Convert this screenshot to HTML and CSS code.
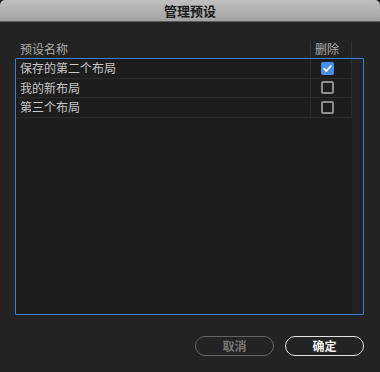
FILE: index.html
```html
<!DOCTYPE html>
<html lang="zh-CN">
<head>
    <meta charset="UTF-8">
    <title>管理预设</title>
    <link rel="stylesheet" href="styles.css">
</head>
<body>
    <div class="window">
        <div class="titlebar">管理预设</div>
        <div class="content">
            <div class="list-head">
                <div class="col-name">预设名称</div>
                <div class="col-del">删除</div>
            </div>
            <div class="list">
                <div class="rows">
                    <div class="row">
                        <div class="cell-name">保存的第二个布局</div>
                        <div class="cell-del"><span class="check checked">
                            <svg width="13" height="13" viewBox="0 0 13 13"><path d="M3.2 6.8 L5.4 9 L9.8 4.2" fill="none" stroke="#fff" stroke-width="1.8" stroke-linecap="round" stroke-linejoin="round"/></svg>
                        </span></div>
                    </div>
                    <div class="row">
                        <div class="cell-name">我的新布局</div>
                        <div class="cell-del"><span class="check"></span></div>
                    </div>
                    <div class="row">
                        <div class="cell-name">第三个布局</div>
                        <div class="cell-del"><span class="check"></span></div>
                    </div>
                </div>
                <div class="scroll"></div>
            </div>
            <div class="buttons">
                <button class="btn btn-cancel">取消</button>
                <button class="btn btn-ok">确定</button>
            </div>
        </div>
    </div>
</body>
</html>
```

FILE: styles.css
```css
html {
    background: #151515;
}
body {
    margin: 0;
    font-family: "Noto Sans CJK SC", "Noto Sans", sans-serif;
    font-size: 12px;
}
.window {
    width: 380px;
    height: 372px;
    background: #232323;
    border-radius: 5px 5px 0 0;
    overflow: hidden;
}
.titlebar {
    height: 22px;
    line-height: 22px;
    text-align: center;
    font-size: 13px;
    font-weight: 700;
    color: #1c1c1c;
    background: linear-gradient(#c0c0c0, #a2a2a2);
    border-bottom: 1px solid #5c5c5c;
    box-sizing: border-box;
}
.content {
    padding: 17px 16px 0 15px;
}
.list-head {
    display: flex;
    align-items: center;
    height: 19px;
    color: #acacac;
}
.list-head div {
    height: 16px;
    line-height: 16px;
    border-right: 1px solid #333;
}
.list-head .col-name {
    width: 290px;
    padding-left: 5px;
}
.list-head .col-del {
    width: 36px;
    padding-left: 4px;
}
.list {
    display: flex;
    height: 257px;
    box-sizing: border-box;
    border: 1px solid #3d7fd4;
    border-radius: 1px;
    background: #1d1d1d;
}
.rows {
    flex: 1;
}
.scroll {
    width: 11px;
    background: #222;
}
.row {
    display: flex;
    height: 19.5px;
    box-sizing: border-box;
    border-bottom: 1px solid #2b2b2b;
    color: #c8c8c8;
}
.row .cell-name {
    width: 290px;
    padding-left: 4px;
    line-height: 18px;
    border-right: 1px solid #2b2b2b;
}
.row .cell-del {
    width: 30px;
    padding-left: 10px;
    display: flex;
    align-items: center;
    border-right: 1px solid #2b2b2b;
}
.check {
    display: block;
    width: 13px;
    height: 13px;
    box-sizing: border-box;
    border: 2px solid #8e8e8e;
    border-radius: 2px;
}
.check.checked {
    border: none;
    background: #4a8fe6;
}
.check svg {
    display: block;
}
.buttons {
    display: flex;
    justify-content: flex-end;
    gap: 11px;
    margin-top: 21px;
}
.btn {
    width: 79px;
    height: 20px;
    padding: 0;
    border-radius: 10px;
    background: transparent;
    font-family: inherit;
    font-size: 12px;
    font-weight: 700;
    line-height: 16px;
}
.btn-cancel {
    border: 1.5px solid #656565;
    color: #777;
}
.btn-ok {
    border: 1.5px solid #e4e4e4;
    color: #f4f4f4;
}
```
